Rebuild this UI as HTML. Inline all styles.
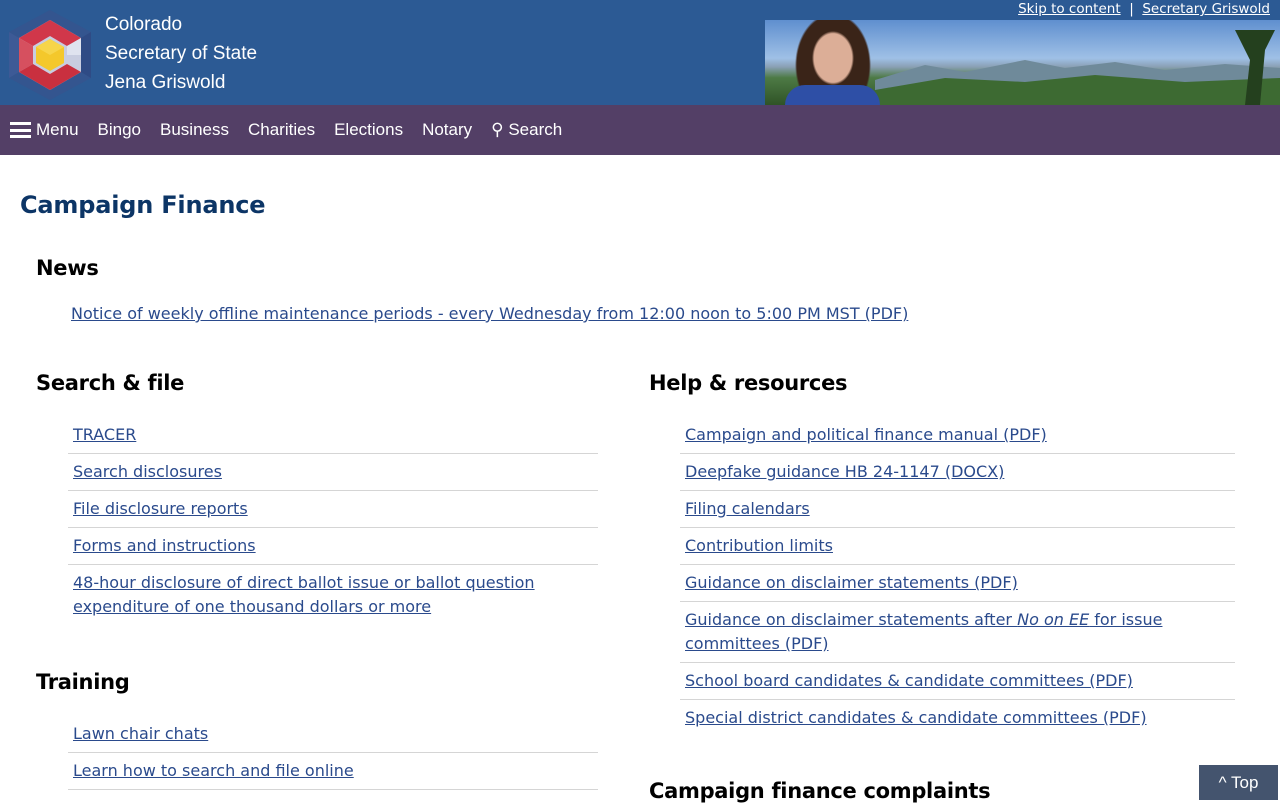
<!DOCTYPE html>
<html><head><meta charset="utf-8"><style>
*{box-sizing:border-box}
body{margin:0;width:1280px;height:800px;overflow:hidden;font-family:"DejaVu Sans",Verdana,sans-serif;background:#fff;color:#000}
.hdr{position:relative;height:105px;background:#2c5a94}
.logo{position:absolute;left:9px;top:10px}
.title{position:absolute;left:105px;top:10px;color:#fff;font-family:"Liberation Sans",Arial,sans-serif;font-size:19px;line-height:29px}
.photo{position:absolute;left:765px;top:20px;width:515px;height:85px;overflow:hidden;background:linear-gradient(180deg,#5f8fcf 0%,#9fc0e6 45%,#8aa0b5 55%,#4d7a45 68%,#2f5326 100%)}
.mtn{position:absolute;left:0;top:0}
.face{position:absolute;left:20px;top:0;width:95px;height:85px;background:radial-gradient(ellipse 21px 27px at 48px 38px,#dcae97 90%,transparent 100%),radial-gradient(ellipse 38px 52px at 48px 45px,#3a2418 95%,transparent 100%);}
.face:after{content:"";position:absolute;left:0;bottom:0;width:95px;height:20px;background:#2e4fa6;border-radius:40px 40px 0 0}
.skip{position:absolute;right:10px;top:1px;font-size:13.5px;color:#fff}
.skip a{color:#fff;text-decoration:underline}
.nav{height:50px;background:#533f66;display:flex;align-items:center;padding-left:10px;font-family:"Liberation Sans",Arial,sans-serif;font-size:17px;color:#fff}
.nav span{margin-right:19px;display:flex;align-items:center}
.hb{display:inline-block;width:21px;height:16px;border-top:3px solid #fff;border-bottom:3px solid #fff;position:relative;margin-right:5px}
.hb:after{content:"";position:absolute;left:0;right:0;top:3.5px;height:3px;background:#fff}
h1{margin:0;position:absolute;left:20px;top:191px;font-size:24px;color:#0c3566;font-weight:bold;letter-spacing:-0.2px}
h2{margin:0;position:absolute;font-size:21px;font-weight:bold;letter-spacing:-0.3px}
a{color:#2a4a8c;text-decoration:underline}
.ul{position:absolute;font-size:16px;line-height:24px}
.ul div{border-bottom:1px solid #d5d5d5;padding:6px 5px 6px 5px}
.ul div:last-child{border-bottom:none}
.top{position:absolute;left:1199px;top:765px;width:79px;height:35px;background:#44546e;color:#fff;font-size:17px;font-family:"Liberation Sans",Arial,sans-serif;text-align:center;line-height:35px}
</style></head><body>
<div class="hdr">
<svg class="logo" width="82" height="90" viewBox="0 0 82 90">
<polygon points="41,0 82,22 82,68 41,90 0,68 0,22" fill="#34558f"/>
<polygon points="41,10 72,28 72,62 41,80 10,62 10,28" fill="#c8cde0"/>
<polygon points="41,10 72,28 58,36 41,26 24,36 10,28" fill="#d1374a"/>
<polygon points="10,28 24,36 24,54 10,62" fill="#d6505f"/>
<polygon points="10,62 24,54 41,64 58,54 72,62 41,80" fill="#c9303f"/>
<polygon points="41,29 55,37 55,53 41,61 27,53 27,37" fill="#f4c82b"/>
<polygon points="41,29 55,37 41,45 27,37" fill="#f7d54a"/>
<polygon points="58,36 72,28 72,45 58,45" fill="#dfe3ef"/>
<polygon points="0,22 10,28 10,62 0,68" fill="#3d5a96"/>
<polygon points="82,22 72,28 72,62 82,68" fill="#2f4b85"/>
</svg>
<div class="title">Colorado<br>Secretary of State<br>Jena Griswold</div>
<div class="photo">
<svg class="mtn" width="515" height="85"><polygon points="110,60 160,45 200,52 260,40 300,48 350,42 400,50 460,44 515,48 515,85 110,85" fill="#6f8a9a"/><polygon points="110,70 180,58 260,62 330,55 420,62 515,58 515,85 110,85" fill="#3d6a32"/><polygon points="470,10 485,40 480,85 495,85 500,30 510,10" fill="#24401e"/></svg>
<div class="face"></div></div>
<div class="skip"><a>Skip to content</a> &nbsp;|&nbsp; <a>Secretary Griswold</a></div>
</div>
<div class="nav"><span><i class="hb"></i>Menu</span><span>Bingo</span><span>Business</span><span>Charities</span><span>Elections</span><span>Notary</span><span>⚲ Search</span></div>
<h1>Campaign Finance</h1>
<h2 style="left:36px;top:256px">News</h2>
<div class="ul" style="left:71px;top:302px"><a>Notice of weekly offline maintenance periods - every Wednesday from 12:00 noon to 5:00 PM MST (PDF)</a></div>
<h2 style="left:36px;top:371px">Search &amp; file</h2>
<div class="ul" style="left:68px;top:417px;width:530px">
<div><a>TRACER</a></div><div><a>Search disclosures</a></div><div><a>File disclosure reports</a></div><div><a>Forms and instructions</a></div><div><a>48-hour disclosure of direct ballot issue or ballot question expenditure of one thousand dollars or more</a></div></div>
<h2 style="left:36px;top:670px">Training</h2>
<div class="ul" style="left:68px;top:716px;width:530px"><div><a>Lawn chair chats</a></div><div style="border-bottom:1px solid #d5d5d5"><a>Learn how to search and file online</a></div></div>
<h2 style="left:649px;top:371px">Help &amp; resources</h2>
<div class="ul" style="left:680px;top:417px;width:555px">
<div><a>Campaign and political finance manual (PDF)</a></div><div><a>Deepfake guidance HB 24-1147 (DOCX)</a></div><div><a>Filing calendars</a></div><div><a>Contribution limits</a></div><div><a>Guidance on disclaimer statements (PDF)</a></div><div><a>Guidance on disclaimer statements after <i>No on EE</i> for issue committees (PDF)</a></div><div><a>School board candidates &amp; candidate committees (PDF)</a></div><div><a>Special district candidates &amp; candidate committees (PDF)</a></div></div>
<h2 style="left:649px;top:779px">Campaign finance complaints</h2>
<div class="top">^ Top</div>
</body></html>
